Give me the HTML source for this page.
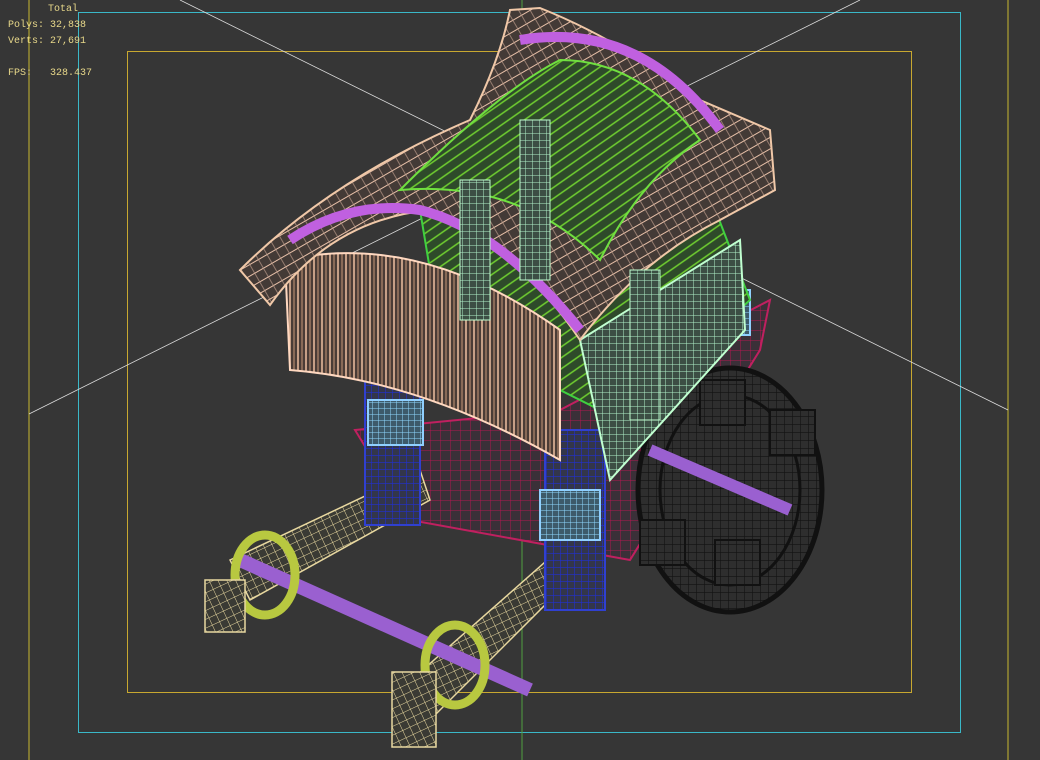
<!DOCTYPE html>
<html><head><meta charset="utf-8"><style>
html,body{margin:0;padding:0;background:#363636;}
.t{position:absolute;font-family:"Liberation Mono",monospace;font-size:10px;color:#e8d88a;line-height:12px;}
</style></head><body>
<div style="position:relative;width:1040px;height:760px;overflow:hidden;background:#363636">
<svg width="1040" height="760" style="position:absolute;left:0;top:0">
<defs>
<pattern id="pv" width="8" height="8" patternUnits="userSpaceOnUse"><rect width="8" height="8" fill="#4a3c36"/><line x1="2" y1="0" x2="2" y2="8" stroke="#f0c0a0" stroke-width="1.5"/><line x1="6" y1="0" x2="6" y2="8" stroke="#c89878" stroke-width="1"/></pattern>
<pattern id="pg" width="9" height="9" patternUnits="userSpaceOnUse" patternTransform="rotate(-35)"><rect width="9" height="9" fill="#2e4a2a"/><line x1="0" y1="3" x2="9" y2="3" stroke="#70d030" stroke-width="1.5"/></pattern>
<pattern id="pr" width="10" height="10" patternUnits="userSpaceOnUse" patternTransform="rotate(-30)"><rect width="10" height="10" fill="#433a36"/><line x1="0" y1="4" x2="10" y2="4" stroke="#e8c0a8" stroke-width="1"/><line x1="4" y1="0" x2="4" y2="10" stroke="#b89888" stroke-width="0.7"/></pattern>
<pattern id="pm" width="7" height="7" patternUnits="userSpaceOnUse"><rect width="7" height="7" fill="#3c4e44"/><path d="M0 0H7M0 0V7" stroke="#b0f0c8" stroke-width="1"/></pattern>
<pattern id="py" width="8" height="8" patternUnits="userSpaceOnUse" patternTransform="rotate(-25)"><rect width="8" height="8" fill="#3a3a34"/><path d="M0 0H8M0 0V8" stroke="#e8d8a0" stroke-width="1"/></pattern>
<pattern id="pk" width="8" height="8" patternUnits="userSpaceOnUse"><rect width="8" height="8" fill="#2e2e2e"/><path d="M0 0H8M0 0V8" stroke="#111" stroke-width="1.2"/></pattern>
<pattern id="pb" width="7" height="7" patternUnits="userSpaceOnUse"><rect width="7" height="7" fill="#33364a"/><path d="M0 0H7M0 0V7" stroke="#2030d0" stroke-width="1.2"/></pattern>
<pattern id="pc" width="6" height="6" patternUnits="userSpaceOnUse"><rect width="6" height="6" fill="#3d5a6a"/><path d="M0 0H6M0 0V6" stroke="#90d8ff" stroke-width="1"/></pattern>
<pattern id="pp" width="10" height="10" patternUnits="userSpaceOnUse"><rect width="10" height="10" fill="#3a3038"/><path d="M0 0H10M0 0V10" stroke="#b01850" stroke-width="1"/></pattern>
</defs>
<line x1="29" y1="0" x2="29" y2="760" stroke="#c8b830"/>
<line x1="1008" y1="0" x2="1008" y2="760" stroke="#c8b830"/>
<rect x="78.5" y="12.5" width="882" height="720" fill="none" stroke="#3ab8c8"/>
<rect x="127.5" y="51.5" width="784" height="641" fill="none" stroke="#c8a830"/>
<line x1="522" y1="0" x2="522" y2="760" stroke="#50a040"/>
<line x1="180" y1="0" x2="1008" y2="410" stroke="#ddd" stroke-width="0.8"/>
<line x1="860" y1="0" x2="29" y2="414" stroke="#ddd" stroke-width="0.8"/>
<path d="M355 430 L560 410 L770 300 L760 350 L630 560 L410 520 Z" fill="url(#pp)" stroke="#c02060" stroke-width="2"/>
<ellipse cx="730" cy="490" rx="92" ry="122" fill="url(#pk)" stroke="#111" stroke-width="5"/>
<ellipse cx="730" cy="490" rx="70" ry="95" fill="none" stroke="#111" stroke-width="3"/>
<rect x="700" y="380" width="45" height="45" fill="url(#pk)" stroke="#111" stroke-width="2"/>
<rect x="640" y="520" width="45" height="45" fill="url(#pk)" stroke="#111" stroke-width="2"/>
<rect x="715" y="540" width="45" height="45" fill="url(#pk)" stroke="#111" stroke-width="2"/>
<rect x="770" y="410" width="45" height="45" fill="url(#pk)" stroke="#111" stroke-width="2"/>
<line x1="650" y1="450" x2="790" y2="510" stroke="#9a60d0" stroke-width="12"/>
<path d="M230 560 L420 470 L430 500 L250 600 Z" fill="url(#py)" stroke="#e8d8a0" stroke-width="1.5"/>
<path d="M400 690 L570 540 L590 560 L430 720 Z" fill="url(#py)" stroke="#e8d8a0" stroke-width="1.5"/>
<line x1="240" y1="560" x2="530" y2="690" stroke="#9a60d0" stroke-width="14"/>
<ellipse cx="265" cy="575" rx="30" ry="40" fill="none" stroke="#b8c840" stroke-width="9"/>
<ellipse cx="455" cy="665" rx="30" ry="40" fill="none" stroke="#b8c840" stroke-width="9"/>
<rect x="205" y="580" width="40" height="52" fill="url(#py)" stroke="#e8d8a0" stroke-width="1.5"/>
<rect x="392" y="672" width="44" height="75" fill="url(#py)" stroke="#e8d8a0" stroke-width="1.5"/>
<rect x="365" y="365" width="55" height="160" fill="url(#pb)" stroke="#3040d0" stroke-width="2"/>
<rect x="545" y="430" width="60" height="180" fill="url(#pb)" stroke="#3040d0" stroke-width="2"/>
<rect x="368" y="400" width="55" height="45" fill="url(#pc)" stroke="#90d0ff" stroke-width="2"/>
<rect x="540" y="490" width="60" height="50" fill="url(#pc)" stroke="#90d0ff" stroke-width="2"/>
<rect x="700" y="290" width="50" height="45" fill="url(#pc)" stroke="#90d0ff" stroke-width="2"/>
<path d="M420 210 L700 170 L750 300 L620 420 L440 330 Z" fill="url(#pg)" stroke="#40d040" stroke-width="2"/>
<path d="M580 340 L740 240 L745 330 L610 480 Z" fill="url(#pm)" stroke="#c0ffd0" stroke-width="2"/>
<path d="M285 260 Q420 230 560 330 L560 460 Q420 380 290 370 Z" fill="url(#pv)" stroke="#ffd8c0" stroke-width="2"/>
<path d="M240 270 Q330 180 470 120 Q500 60 510 10 L540 8 Q620 40 700 100 L770 130 L775 190 L720 220 Q640 260 580 340 Q520 250 430 210 Q330 220 270 305 Z" fill="url(#pr)" stroke="#f0c8a8" stroke-width="2"/>
<path d="M290 240 Q350 200 420 210 Q500 230 580 330" fill="none" stroke="#c060e0" stroke-width="10"/>
<path d="M520 40 Q640 20 720 130" fill="none" stroke="#c060e0" stroke-width="10"/>
<path d="M400 190 Q500 90 560 60 Q640 60 700 140 Q640 180 600 260 Q520 180 400 190 Z" fill="url(#pg)" stroke="#70e040" stroke-width="2"/>
<rect x="460" y="180" width="30" height="140" fill="url(#pm)" stroke="#c0ffd0"/>
<rect x="520" y="120" width="30" height="160" fill="url(#pm)" stroke="#c0ffd0"/>
<rect x="630" y="270" width="30" height="150" fill="url(#pm)" stroke="#c0ffd0"/>
</svg>
<div class="t" style="left:48px;top:4px">Total</div>
<div class="t" style="left:8px;top:20px">Polys: 32,838</div>
<div class="t" style="left:8px;top:36px">Verts: 27,691</div>
<div class="t" style="left:8px;top:68px">FPS:&nbsp;&nbsp; 328.437</div>
</div>
</body></html>
